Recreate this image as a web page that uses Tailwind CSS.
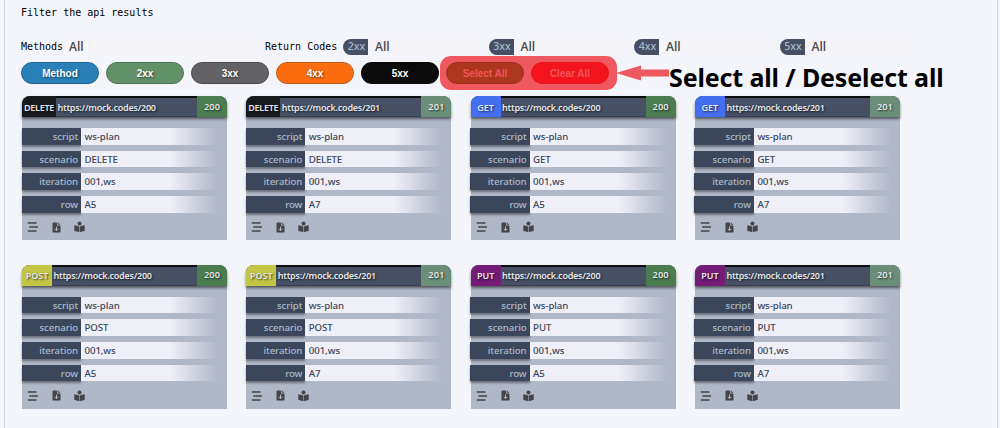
<!DOCTYPE html>
<html lang="en">
<head>
<meta charset="utf-8">
<title>Api results</title>
<script src="https://cdn.jsdelivr.net/npm/@tailwindcss/browser@4"></script>
</head>
<body class="h-[428px] w-[1000px] overflow-hidden bg-[#f4f5fb]">
<main class="relative ml-1 h-[428px] w-[994px] border-x border-[#d0d2dc] bg-[#f4f5fb] pl-4 font-['DejaVu_Sans_Mono',monospace] text-[10px] text-black">
  <h1 class="h-[38px] pt-[5px] leading-4 whitespace-nowrap">Filter the api results</h1>

  <div class="flex h-[17px] items-center whitespace-nowrap">
    <span class="w-[44px]">Methods</span>
    <span class="flex h-4 w-[186px] items-center bg-[#f5f4f9] pl-[4px] font-['Open_Sans',sans-serif] text-[12px] font-semibold text-[#4a4a4a]">All</span>
    <span class="ml-[14px] w-[78px]">Return Codes</span>
    <div id="codes" class="flex"></div>
  </div>

  <div class="relative mt-[7px] flex h-[22px] gap-[7px] font-['Liberation_Sans',sans-serif] text-[10px] font-bold text-white">
    <div class="absolute -top-[6px] left-[419px] h-[34px] w-[177px] rounded-[11px] bg-[#f05860]"></div>
    <span class="flex w-[78px] items-center justify-center rounded-full border border-[#1f648f] bg-[#2980b9] text-shadow-[1px_1px_2px_#0008]">Method</span>
    <span class="flex w-[78px] items-center justify-center rounded-full border border-[#4c7452] bg-[#629168] text-shadow-[1px_1px_2px_#0008]">2xx</span>
    <span class="flex w-[78px] items-center justify-center rounded-full border border-[#4b4b4d] bg-[#636366] text-shadow-[1px_1px_2px_#0008]">3xx</span>
    <span class="flex w-[78px] items-center justify-center rounded-full border border-[#bb5b1d] bg-[#fb6d0e] text-shadow-[1px_1px_2px_#0008]">4xx</span>
    <span class="flex w-[78px] items-center justify-center rounded-full bg-[#0b0b0c]">5xx</span>
    <span class="relative flex w-[78px] items-center justify-center rounded-full border border-[#9f2f1d] bg-[#ad371e] text-[#f0565c]">Select All</span>
    <span class="relative flex w-[78px] items-center justify-center rounded-full border border-[#e5151f] bg-[#f3141d] text-[#f0565c]">Clear All</span>
    <svg class="absolute -top-[1px] left-[593px] h-6 w-14" viewBox="0 0 56 24"><path d="M2 12L27 4.500V8.500H55V15.500H27V19.500Z" fill="#f05860"/></svg>
    <span class="absolute top-[-2px] left-[648px] font-['Noto_Sans',sans-serif] text-[25px] leading-[34px] font-bold tracking-[-0.13px] whitespace-nowrap text-black">Select all / Deselect all</span>
  </div>

  <div id="cards" class="mt-[12px] ml-[1px] grid w-[900px] grid-cols-[repeat(4,205px)] gap-x-[19.300px] gap-y-[24.500px] font-['Noto_Sans',sans-serif]"></div>
</main>
<script>
document.getElementById('codes').innerHTML = ['2xx', '3xx', '4xx', '5xx'].map(c => `
  <div class="flex w-[145.500px]">
    <span class="flex h-4 w-[25px] items-center justify-center rounded-l-full bg-[#464f63] pt-[1px] pl-[2px] font-['Noto_Sans',sans-serif] text-[10.500px] font-medium text-[#a6b9cc]">${c}</span>
    <span class="ml-[3px] flex h-4 w-[103px] items-center bg-[#f5f4f9] pl-[4px] font-['Open_Sans',sans-serif] text-[12px] font-semibold text-[#4a4a4a]">All</span>
  </div>`).join('');

const tones = {
  DELETE: 'w-[34px] bg-[#181a1e]',
  GET: 'w-[30px] bg-[#436ff0]',
  POST: 'w-[30px] bg-[#c3c544]',
  PUT: 'w-[30px] bg-[#741b78]'
};
const statusTones = { 200: 'bg-[#4b7d51]', 201: 'bg-[#6b8e78]' };
const cards = [['DELETE', 200], ['DELETE', 201], ['GET', 200], ['GET', 201], ['POST', 200], ['POST', 201], ['PUT', 200], ['PUT', 201]];

document.getElementById('cards').innerHTML = cards.map(([method, status]) => {
  const rows = [['script', 'ws-plan'], ['scenario', method], ['iteration', '001,ws'], ['row', status === 200 ? 'A5' : 'A7']];
  return `
  <article class="h-[144px] rounded-t-[8px] bg-[#b0b7c7]">
    <header class="flex h-[21px] overflow-hidden rounded-t-[8px] bg-[#464f63] text-[9px] font-semibold whitespace-nowrap text-[#e4e6ea] shadow-[0_2px_3px_#0008] text-shadow-[1px_1px_2px_#000a]">
      <span class="flex items-center justify-center pt-[2px] ${tones[method]} ${method === 'DELETE' ? 'tracking-[-0.25px]' : ''}">${method}</span>
      <span class="flex flex-1 items-center border-t-2 border-b border-t-[#0c0e12] border-b-[#363e50] pt-[1px] pl-[1.500px] tracking-[-0.25px]">https://mock.codes/${status}</span>
      <span class="flex w-[30px] items-center justify-center text-[9.300px] ${statusTones[status]}">${status}</span>
    </header>
    <dl class="mt-[11px] flex flex-col gap-[6px] text-[9.700px]">
      ${rows.map(([k, v]) => `
      <div class="flex h-[16.700px] leading-[18px]">
        <dt class="-ml-[0.500px] w-[59.500px] bg-[#3c465a] pr-[3px] text-right font-medium tracking-[-0.1px] text-[#a9bbce] shadow-[0_2px_2px_#0006]">${k}</dt>
        <dd class="w-[137px] bg-linear-to-r from-[#efeff8] from-65% to-[#b0b7c7] pl-[3.500px] font-medium tracking-[-0.1px] text-[#3c465a]">${v}</dd>
      </div>`).join('')}
    </dl>
    <footer class="mt-[8px] flex h-[13px] items-center gap-[12px] pl-[5px] text-[#454545]">
      <svg class="size-[12px]" viewBox="0 0 12 12" fill="none" stroke="currentColor" stroke-width="1.700"><path d="M.8 2H9.500M2.300 6H11M.8 10H9.500"/></svg>
      <svg class="size-[11px]" viewBox="0 0 11 11"><path fill="currentColor" d="M1.500 1Q1.500.5 2 .5H6V3.500H9.500V10Q9.500 10.500 9 10.500H2Q1.500 10.500 1.500 10ZM6.800.5L9.500 2.800H6.800Z"/><path stroke="#b0b7c7" fill="none" d="M5.500 4.500V8.500M3.700 6.800L5.500 8.600L7.300 6.800"/></svg>
      <svg class="size-[12px]" viewBox="0 0 12 12" fill="currentColor"><circle cx="5.500" cy="2.500" r="2"/><path d="M.3 4.200Q3.500 4.300 5.200 5.600V11.200Q3 10.200 .3 10ZM10.700 4.200Q7.500 4.300 5.800 5.600V11.200Q8 10.200 10.700 10Z"/></svg>
    </footer>
  </article>`;
}).join('');
</script>
</body>
</html>
